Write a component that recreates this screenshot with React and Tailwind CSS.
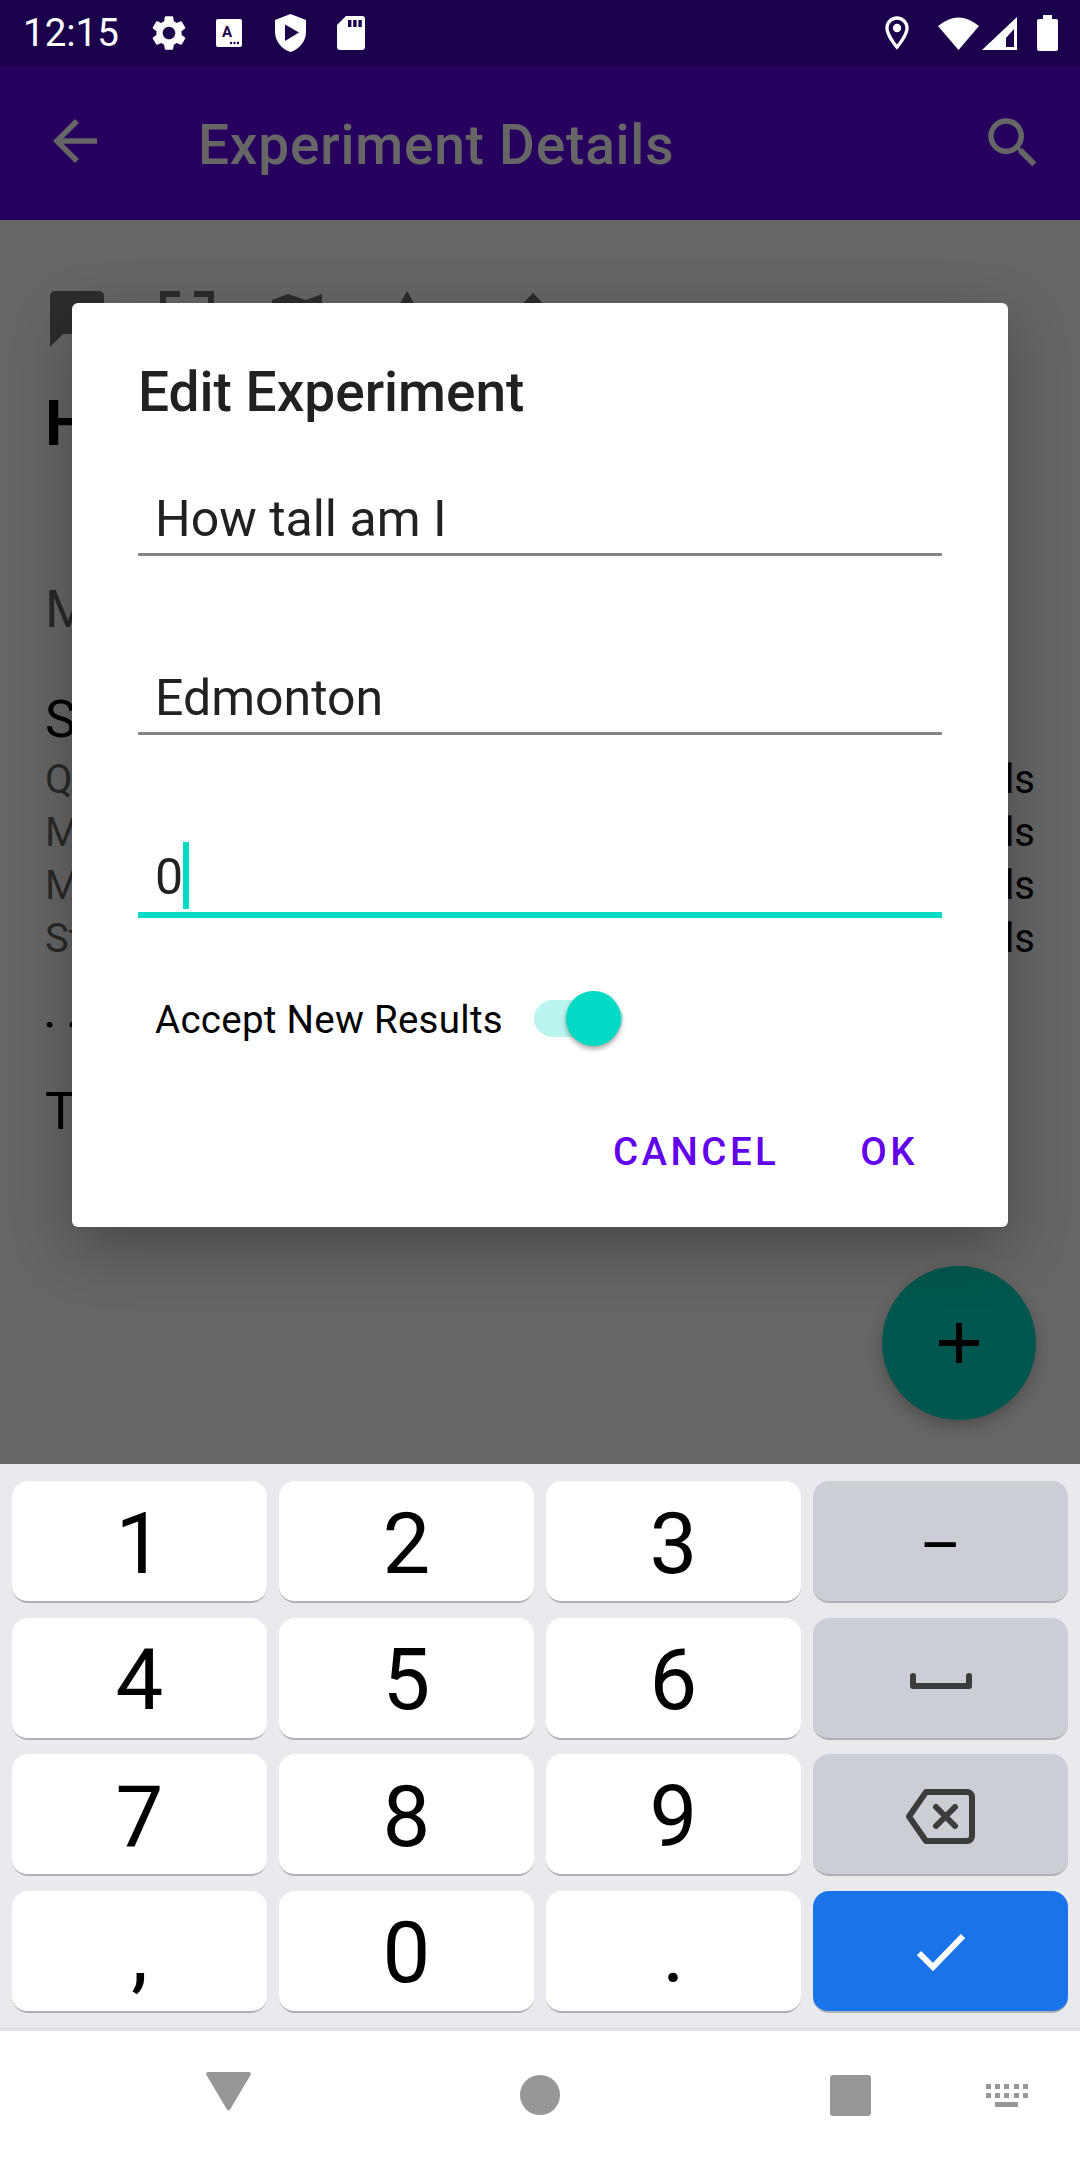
import { MdArrowBack, MdSearch, MdSettings, MdOutlineLocationOn } from 'react-icons/md';

const digits = [
  ['1', '2', '3'],
  ['4', '5', '6'],
  ['7', '8', '9'],
  [',', '0', '.'],
];

const stats = ['Quartiles', 'Median', 'Mean', 'Std Dev'];

function Key({ children, tone = 'white' }) {
  const tones = {
    white: 'bg-white',
    grey: 'bg-[#cbced5]',
    blue: 'bg-[#1a73e8]',
  };
  return (
    <div className={`${tones[tone]} h-[122px] pt-[6px] rounded-[16px] border-b-[2px] border-[#aeb0b5] flex items-center justify-center text-black text-[85px] leading-none`}>
      {children}
    </div>
  );
}

function StatusBar() {
  return (
    <div className="h-[66px] bg-[#1b004b] flex items-center pl-[23px] pr-[22px] text-white shrink-0">
      <span className="text-[38.5px] leading-none w-[97px]">12:15</span>
      <MdSettings className="ml-[28px] w-[42px] h-[42px]" />
      <svg className="ml-[26px]" width="26" height="28" viewBox="0 0 26 28">
        <rect width="26" height="28" rx="2" fill="#fff" />
        <text x="11" y="18" textAnchor="middle" fontSize="15" fontWeight="700" fontFamily="Roboto, sans-serif" fill="#1b004b">A</text>
        <circle cx="15" cy="24" r="1.2" fill="#1b004b" />
        <circle cx="18.5" cy="24" r="1.2" fill="#1b004b" />
        <circle cx="22" cy="24" r="1.2" fill="#1b004b" />
      </svg>
      <svg className="ml-[33px]" width="31" height="38" viewBox="0 0 31 38">
        <path d="M15.5 0 L31 6 V18 C31 27 24.5 35 15.5 38 C6.5 35 0 27 0 18 V6 Z" fill="#fff" />
        <path d="M10 10.5 V27 L24 18.5 Z" fill="#1b004b" />
      </svg>
      <svg className="ml-[31px]" width="28" height="34" viewBox="0 0 28 34">
        <path d="M9 0 H25 A3 3 0 0 1 28 3 V31 A3 3 0 0 1 25 34 H3 A3 3 0 0 1 0 31 V9 Z" fill="#fff" />
        <rect x="11" y="4" width="3.4" height="7" fill="#1b004b" />
        <rect x="16.2" y="4" width="3.4" height="7" fill="#1b004b" />
        <rect x="21.4" y="4" width="3.4" height="7" fill="#1b004b" />
      </svg>
      <div className="flex-1" />
      <MdOutlineLocationOn className="w-[40px] h-[40px]" />
      <svg className="ml-[21px]" width="41" height="34" viewBox="0 0 41 34">
        <path d="M0 10 Q20.5 -7 41 10 L20.5 34 Z" fill="#fff" />
      </svg>
      <svg className="ml-[3px]" width="35" height="33" viewBox="0 0 35 33">
        <path d="M35 0 V33 H0 Z M32 12 L24 21 V30 H32 Z" fillRule="evenodd" fill="#fff" />
      </svg>
      <svg className="ml-[20px]" width="21" height="36" viewBox="0 0 21 36">
        <path d="M6 0 H15 V4 H19 A2 2 0 0 1 21 6 V34 A2 2 0 0 1 19 36 H2 A2 2 0 0 1 0 34 V6 A2 2 0 0 1 2 4 H6 Z" fill="#fff" />
      </svg>
    </div>
  );
}

function BackgroundPage() {
  return (
    <div className="absolute inset-0 flex flex-col bg-white">
      <div className="h-[154px] bg-[#6200ee] flex items-center pl-[42px] pr-[34px] text-white shrink-0">
        <MdArrowBack className="w-[66px] h-[66px] mt-[-4px]" />
        <span className="ml-[90px] pt-[4px] text-[55px] leading-none font-medium tracking-[0.78px]">Experiment Details</span>
        <div className="flex-1" />
        <MdSearch className="w-[66px] h-[66px]" />
      </div>
      <div className="px-[45px] pt-[71px] text-black">
        <div className="flex gap-[56px] pl-[5px] text-[#6e6e6e]">
          <svg width="54" height="56" viewBox="0 0 54 56" fill="currentColor">
            <path d="M5 0 H49 A5 5 0 0 1 54 5 V38 A5 5 0 0 1 49 43 H13 L0 56 V5 A5 5 0 0 1 5 0 Z" />
          </svg>
          <svg width="54" height="56" viewBox="0 0 54 56" fill="none" stroke="currentColor" strokeWidth="6">
            <path d="M3 18 V3 H20 M34 3 H51 V18 M3 38 V53 H20 M34 53 H51 V38" />
          </svg>
          <svg width="54" height="56" viewBox="0 0 54 56" fill="currentColor">
            <path d="M2 9 L18 3 L36 9 L52 3 V47 L36 53 L18 47 L2 53 Z" />
          </svg>
          <svg width="54" height="56" viewBox="0 0 54 56" fill="currentColor">
            <path d="M27 0 L54 48 H0 Z" />
          </svg>
          <svg className="ml-[16px] mt-[2px]" width="54" height="56" viewBox="0 0 54 56" fill="currentColor">
            <path d="M27 0 L54 28 L27 56 L0 28 Z" />
          </svg>
        </div>
        <p className="mt-[38px] text-[63px] leading-[74px] font-bold text-black">How tall am I</p>
        <p className="mt-[117px] text-[52.5px] leading-[62px] text-black/60">Mass</p>
        <p className="mt-[48px] text-[52.5px] leading-[62px]">Statistics</p>
        <div className="mt-[3px] text-[40px] leading-[53px]">
          {stats.map(label => (
            <div key={label} className="flex justify-between">
              <span className="text-black/60">{label}</span>
              <span className="text-black">Details</span>
            </div>
          ))}
        </div>
        <p className="mt-[13px] ml-[-2px] text-[52.5px] leading-[62px] tracking-[9px]">...</p>
        <p className="mt-[40px] text-[52.5px] leading-[62px]">Trials</p>
      </div>
      <div className="absolute right-[44px] bottom-[44px] w-[154px] h-[154px] rounded-full bg-[#03dac5] shadow-[0_6px_16px_rgba(0,0,0,0.25)] flex items-center justify-center">
        <svg width="40" height="40" viewBox="0 0 40 40" fill="#000">
          <path d="M17 0 H23 V17 H40 V23 H23 V40 H17 V23 H0 V17 H17 Z" />
        </svg>
      </div>
    </div>
  );
}

function Field({ value, focused }) {
  if (focused) {
    return (
      <div className="mt-[112px] pb-[5px] border-b-[6px] border-[#03dac5] pl-[17px] text-[50px] leading-[60px] text-[#212121]">
        <span className="relative">
          {value}
          <span className="absolute left-full top-[-6px] h-[67px] w-[6px] bg-[#03dac5]" />
        </span>
      </div>
    );
  }
  return (
    <div className="pb-[4px] border-b-[3px] border-[#858585] pl-[17px] text-[50px] leading-[60px] text-[#212121]">
      {value}
    </div>
  );
}

function EditDialog() {
  return (
    <div className="absolute left-[72px] top-[237px] w-[936px] h-[924px] bg-white rounded-[6px] px-[66px] pt-[58px] shadow-[0_20px_60px_rgba(0,0,0,0.3)]">
      <h2 className="text-[55px] leading-[62px] font-medium text-[#212121]">Edit Experiment</h2>
      <div className="mt-[66px]">
        <Field value="How tall am I" />
      </div>
      <div className="mt-[112px]">
        <Field value="Edmonton" />
      </div>
      <Field value="0" focused />
      <div className="mt-[72px] h-[56px] flex items-center pl-[17px]">
        <span className="pt-[4px] text-[38.5px] leading-[48px] tracking-[0.27px] text-black">Accept New Results</span>
        <div className="relative ml-[31px] w-[89px] h-[37px] rounded-full bg-[#b9f4ee]">
          <div className="absolute left-[32px] top-[-9px] w-[55px] h-[55px] rounded-full bg-[#03dac5] shadow-[0_3px_5px_rgba(0,0,0,0.35)]" />
        </div>
      </div>
      <div className="mt-[84px] flex justify-end gap-[81px] pr-[24px] text-[38.5px] leading-[44px] font-medium tracking-[3.43px] text-[#6200ee]">
        <span>CANCEL</span>
        <span>OK</span>
      </div>
    </div>
  );
}

function Keyboard() {
  return (
    <div className="h-[567px] shrink-0 bg-[#e8eaed] border-b-[3px] border-[#dfe1e5] pt-[17px] px-[12px] grid grid-cols-[255px_255px_255px_255px] auto-rows-[122px] gap-x-[12px] gap-y-[14.67px]">
      {digits.map((row, i) => (
        <div key={i} className="contents">
          {row.map(d => (
            <Key key={d}>{d}</Key>
          ))}
          {i === 0 && <Key tone="grey"><span className="text-[64px] leading-none mt-[5px]">–</span></Key>}
          {i === 1 && (
            <Key tone="grey">
              <svg width="62" height="16" viewBox="0 0 62 16" fill="none" stroke="#3c3c3c" strokeWidth="6" strokeLinejoin="round" strokeLinecap="round">
                <path d="M3 3 V13 H59 V3" />
              </svg>
            </Key>
          )}
          {i === 2 && (
            <Key tone="grey">
              <svg className="mt-[-2px]" width="70" height="55" viewBox="0 0 70 55" fill="none" stroke="#3c3c3c" strokeWidth="6" strokeLinejoin="round" strokeLinecap="round">
                <path d="M20 3 H61 A5 5 0 0 1 66 8 V47 A5 5 0 0 1 61 52 H20 L3 27.5 Z" />
                <path d="M30 18 L49 37 M49 18 L30 37" />
              </svg>
            </Key>
          )}
          {i === 3 && (
            <Key tone="blue">
              <svg className="mt-[-2px]" width="48" height="37" viewBox="0 0 48 37" fill="none" stroke="#fff" strokeWidth="6">
                <path d="M2 19 L16 33 L46 2" />
              </svg>
            </Key>
          )}
        </div>
      ))}
    </div>
  );
}

function NavBar() {
  return (
    <div className="flex-1 bg-white flex items-start pl-[206px] pt-[41px]">
      <svg width="45" height="39" viewBox="0 0 45 39" fill="#979797">
        <path d="M2 0 H43 A2 2 0 0 1 44.6 3 L24 37.5 A2 2 0 0 1 21 37.5 L0.4 3 A2 2 0 0 1 2 0 Z" />
      </svg>
      <div className="ml-[269px] mt-[3px] w-[40px] h-[40px] rounded-full bg-[#979797]" />
      <div className="ml-[270px] mt-[3px] w-[41px] h-[41px] rounded-[3px] bg-[#979797]" />
      <svg className="ml-[115px] mt-[12px]" width="42" height="23" viewBox="0 0 42 23" fill="#979797">
        <path d="M0 0h5v5H0zM9 0h5v5H9zM18 0h5v5h-5zM28 0h5v5h-5zM37 0h5v5h-5zM0 9h5v5H0zM9 9h5v5H9zM18 9h5v5h-5zM28 9h5v5h-5zM37 9h5v5h-5zM9 18h23v5H9z" />
      </svg>
    </div>
  );
}

export default function App() {
  return (
    <div className="w-[1080px] h-[2160px] flex flex-col overflow-hidden font-['Roboto',sans-serif]">
      <StatusBar />
      <div className="relative h-[1398px] shrink-0 overflow-hidden">
        <BackgroundPage />
        <div className="absolute inset-0 bg-black/60" />
        <EditDialog />
      </div>
      <Keyboard />
      <NavBar />
    </div>
  );
}
